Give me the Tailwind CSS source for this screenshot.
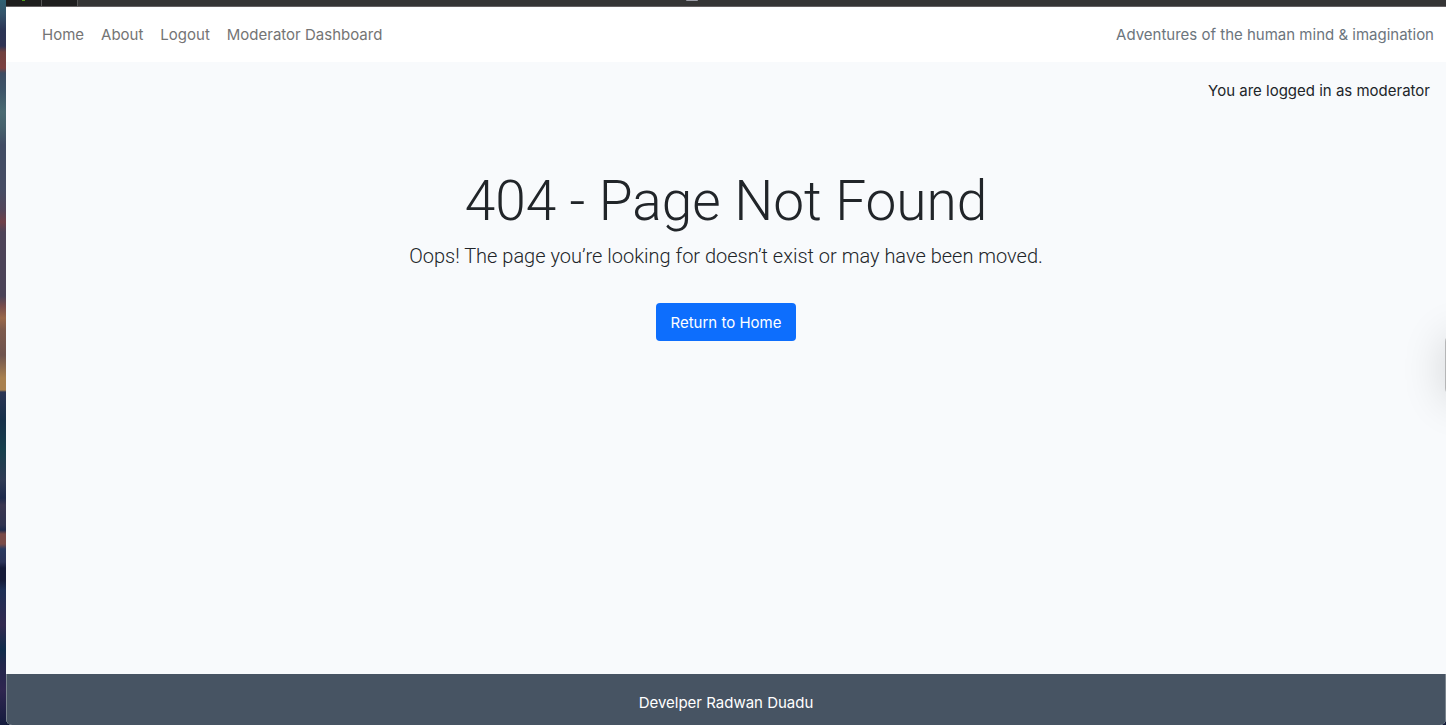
<!DOCTYPE html>
<html lang="en">
<head>
<meta charset="utf-8">
<meta name="viewport" content="width=device-width, initial-scale=1">
<title>404 - Page Not Found</title>
<script src="https://cdn.jsdelivr.net/npm/@tailwindcss/browser@4"></script>
</head>
<body class="flex h-screen overflow-hidden bg-[#111a38] font-['Inter',sans-serif] text-[15px] leading-6 text-[#212529]">
  <!-- Desktop wallpaper edge -->
  <div class="w-1.5 shrink-0 bg-[linear-gradient(180deg,#2f6173_0px,#34536a_14px,#2b3555_30px,#2f3354_46px,#70413f_52px,#7d4040_68px,#3d4c62_73px,#3d5468_90px,#4a6a72_112px,#46606c_128px,#414c64_145px,#464c64_190px,#53455a_210px,#704048_222px,#4d4358_232px,#4b4358_296px,#774c4c_306px,#9a6849_318px,#7d5a4c_330px,#6f544f_355px,#a8804f_378px,#a8804f_390px,#2b3555_392px,#17304a_420px,#17404d_450px,#2f3a54_480px,#1d2a4c_498px,#3a3650_505px,#2f3350_525px,#1d2a4c_530px,#7a4b48_534px,#7a4b48_544px,#2a3a60_549px,#2b3358_562px,#141a38_568px,#141a38_580px,#1d2f56_590px,#332a50_625px,#102c4c_650px,#23264c_665px,#2f2650_690px,#151c3e_725px)]"></div>
  <!-- Window -->
  <div class="relative flex min-w-0 flex-1 flex-col overflow-hidden rounded-b-md bg-[#f8fafc]">
    <div class="flex h-[7px] shrink-0 border-b border-[#656163] bg-[#353535]">
      <div class="flex w-9 justify-center border-r border-[#555] bg-[#1e1e1e]"><span class="h-px w-[3px] bg-[#4f9a1b]"></span></div>
      <div class="w-9 border-r border-[#555] bg-[#1e1e1e]"></div>
      <div class="flex flex-1 justify-center pr-[140px]"><span class="h-px w-3 rounded-b-sm bg-[#9c9ca6]"></span></div>
    </div>
    <nav class="flex h-[55px] shrink-0 items-center justify-between bg-white pr-3 pl-7">
      <ul class="flex gap-px text-[#747474]">
        <li><a href="#" class="block px-2 py-2">Home</a></li>
        <li><a href="#" class="block px-2 py-2">About</a></li>
        <li><a href="#" class="block px-2 py-2">Logout</a></li>
        <li><a href="#" class="block px-2 py-2">Moderator Dashboard</a></li>
      </ul>
      <span class="text-[#6c757d]">Adventures of the human mind &amp; imagination</span>
    </nav>
    <main class="flex-1">
      <p class="px-4 pt-[17px] text-right">You are logged in as moderator</p>
      <div class="mt-16 text-center">
        <h1 class="font-['Roboto','Inter',sans-serif] text-[55px] leading-[68px] font-light">404 - Page Not Found</h1>
        <p class="mt-1.5 font-['Roboto','Inter',sans-serif] text-[20px] leading-[30px] font-light">Oops! The page you’re looking for doesn’t exist or may have been moved.</p>
        <a href="#" class="mt-8 inline-block rounded bg-[#0d6efd] px-[15px] pt-2 pb-1.5 text-white">Return to Home</a>
      </div>
    </main>
    <footer class="border-x border-[#7b858f] bg-[#475463] pt-[17px] pb-2.5 text-center text-white">Develper Radwan Duadu</footer>
    <!-- Neighbouring window and its shadow at the screen edge -->
    <div class="absolute top-[334px] -right-10 h-[62px] w-[41px] rounded-lg bg-[#b5b6b7] shadow-[0_4px_44px_rgba(0,0,0,0.16)]"></div>
  </div>
</body>
</html>
